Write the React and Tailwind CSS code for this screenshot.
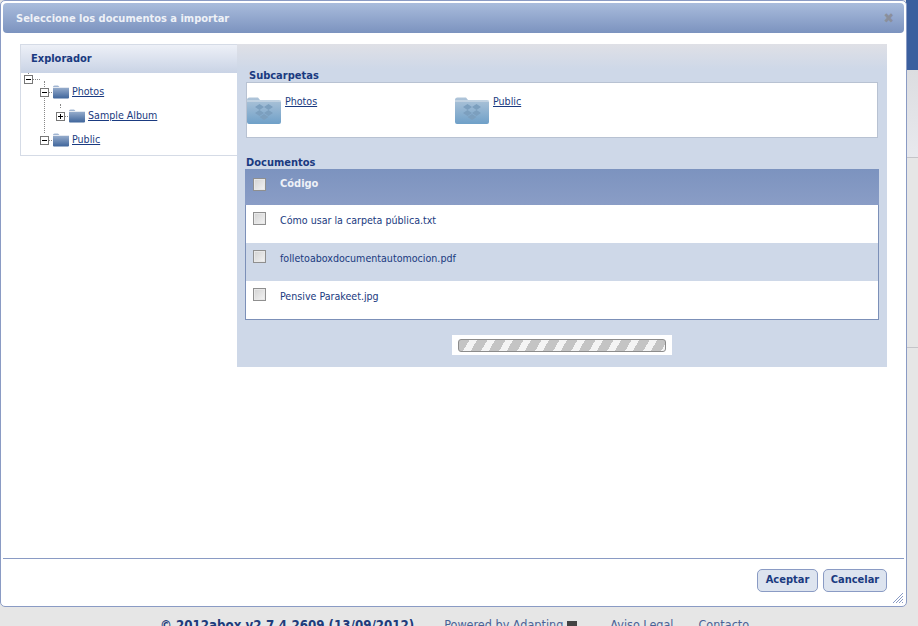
import React from 'react';

const FONT = "font-['Tahoma','DejaVu_Sans_Condensed','Noto_Sans','Liberation_Sans',sans-serif]";

const TreeToggle = ({ plus }) => (
  <span className="relative w-[9px] h-[9px] border border-[#777] bg-white shrink-0 flex items-center justify-center">
    <span className="w-[5px] h-px bg-black" />
    {plus && <span className="absolute w-px h-[5px] bg-black" />}
  </span>
);

const Dots = () => <span className="w-[3px] border-t border-dotted border-[#888] shrink-0" />;

const SmallFolder = () => (
  <svg width="16" height="14" viewBox="0 0 16 14" className="shrink-0">
    <defs>
      <linearGradient id="sf" x1="0" y1="0" x2="0" y2="1">
        <stop offset="0" stopColor="#a8bbd6" />
        <stop offset="1" stopColor="#3f659b" />
      </linearGradient>
    </defs>
    <path d="M0 2 Q0 0.5 1.5 0.5 H5 L6.5 2 H15 Q16 2 16 3 V12.5 Q16 13.5 15 13.5 H1 Q0 13.5 0 12.5 Z" fill="url(#sf)" />
    <path d="M0 2.5 H16" stroke="#e4e9f1" strokeWidth="1" />
  </svg>
);

const DropboxFolder = () => (
  <svg width="34" height="27" viewBox="0 0 34 27" className="shrink-0 mt-[3px]">
    <defs>
      <linearGradient id="df" x1="0" y1="0" x2="0" y2="1">
        <stop offset="0" stopColor="#b0c5d9" />
        <stop offset="1" stopColor="#6fa0c8" />
      </linearGradient>
    </defs>
    <path d="M0 3 Q0 0.5 2.5 0.5 H11 L13 3 H32 Q34 3 34 5 V25 Q34 27 32 27 H2 Q0 27 0 25 Z" fill="url(#df)" />
    <path d="M0 4 H34" stroke="#dbe4ec" strokeWidth="1" />
    <path d="M12.5 7 L17 10 L12.5 13 L8 10 Z M21.5 7 L26 10 L21.5 13 L17 10 Z M12.5 13 L17 16 L12.5 19 L8 16 Z M21.5 13 L26 16 L21.5 19 L17 16 Z M17 17 L21.5 20 L17 23 L12.5 20 Z" fill="#7c9fbe" />
  </svg>
);

const Checkbox = () => (
  <span className="block w-[13px] h-[13px] shrink-0 border border-[#8f8f8f] bg-gradient-to-br from-[#d2d2d2] to-[#f4f4f4] shadow-[inset_0_0_0_1px_#e8e8e8]" />
);

const docs = [
  { name: 'Cómo usar la carpeta pública.txt', bg: 'bg-white' },
  { name: 'folletoaboxdocumentautomocion.pdf', bg: 'bg-[#ced8e8]' },
  { name: 'Pensive Parakeet.jpg', bg: 'bg-white' },
];

export default function App() {
  return (
    <div className={`relative w-[918px] h-[626px] overflow-hidden bg-[#e6e6e6] flex flex-col ${FONT}`}>
      {/* page behind the dialog */}
      <div className="flex-1 flex flex-col items-end">
        <div className="w-3 h-[70px] bg-[#3b5f9e]" />
        <div className="w-3 h-[88px] bg-gradient-to-b from-[#dcdde0] to-[#e8e9ee] border-b border-[#c4c4c8]" />
        <div className="w-3 h-[190px] border-b border-[#c4c4c8]" />
      </div>
      <div className="h-5 shrink-0 flex items-start pl-[160px] pt-[10px] text-[12.5px] text-[#4a6296] whitespace-nowrap">
        <span className="text-[13.2px] font-bold text-[#1f3c7c]">© 2012abox v2.7.4.2609 (13/09/2012)</span>
        <span className="ml-[30px]">Powered by Adapting</span>
        <span className="ml-1 mt-[5px] w-[10px] h-[10px] bg-[#444]" />
        <span className="ml-[33px]">Aviso Legal</span>
        <span className="ml-[25px]">Contacto</span>
      </div>

      {/* dialog */}
      <div className="absolute left-0 top-0 w-[907px] h-[607px] bg-white border border-[#8a9bc4] rounded-[5px] p-[2px] flex flex-col">
        <div className="h-[30px] shrink-0 rounded-[4px] bg-gradient-to-b from-[#a9bcdc] to-[#7c93bf] flex items-center justify-between pl-[13px] pr-[10px]">
          <span className="pt-[2px] text-[11px] font-bold text-[#eef1f7]">Seleccione los documentos a importar</span>
          <span className="text-[14px] leading-none font-bold text-[#8a8f9c]">✖</span>
        </div>

        <div className="flex-1 flex items-start pl-[17px] pr-[17px] pt-[11px]">
          {/* tree */}
          <div className="w-[217px] shrink-0 h-[112px] border border-[#d5dbe6] border-r-0">
            <div className="h-[28px] bg-gradient-to-b from-[#edf0f7] to-[#c9d3e5] flex items-center pl-[10px] text-[11px] font-bold text-[#1a3a80]">
              Explorador
            </div>
            <div className="relative text-[10.6px] text-[#1a3a80]">
              <span className="absolute left-[7px] top-0 h-[3px] border-l border-dotted border-[#888]" />
              <span className="absolute left-[12px] top-[6px] w-[7px] border-t border-dotted border-[#888]" />
              <span className="absolute left-[23px] top-[8px] h-[52px] border-l border-dotted border-[#888]" />
              <span className="absolute left-[39px] top-[31px] h-[4px] border-l border-dotted border-[#888]" />
              <div className="pl-[3px] pt-[2px] h-[7px]"><TreeToggle /></div>
              <div className="flex items-center h-[24px] pl-[19px]">
                <TreeToggle /><Dots /><span className="w-px" /><SmallFolder />
                <span className="underline ml-[3px]">Photos</span>
              </div>
              <div className="flex items-center h-[24px] pl-[35px]">
                <TreeToggle plus /><Dots /><span className="w-px" /><SmallFolder />
                <span className="underline ml-[3px]">Sample Album</span>
              </div>
              <div className="flex items-center h-[24px] pl-[19px]">
                <TreeToggle /><Dots /><span className="w-px" /><SmallFolder />
                <span className="underline ml-[3px]">Public</span>
              </div>
            </div>
          </div>

          {/* content */}
          <div className="flex-1 h-[323px] bg-[#ced8e8] flex flex-col">
            <div className="h-[25px] shrink-0 bg-gradient-to-b from-[#dfe0e6] to-[#ced8e8]" />
            <div className="pl-[12px] text-[11px] leading-[13px] font-bold text-[#1a3a80]">Subcarpetas</div>
            <div className="mx-[9px] h-[56px] bg-white border border-[#b8c2d2] flex pt-[11px] text-[10.6px] text-[#1a3a80]">
              <div className="w-[208px] flex items-start gap-[4px]">
                <DropboxFolder /><span className="mt-px underline leading-[13px]">Photos</span>
              </div>
              <div className="flex items-start gap-[4px]">
                <DropboxFolder /><span className="mt-px underline leading-[13px]">Public</span>
              </div>
            </div>
            <div className="mt-[18px] pl-[9px] text-[11px] leading-[13px] font-bold text-[#1a3a80]">Documentos</div>
            <div className="mx-[8px] border border-t-0 border-[#7c90b8] bg-white">
              <div className="h-[36px] -mx-px bg-gradient-to-b from-[#7c93bf] to-[#8a9dc6] flex items-center pl-[8px] pb-[6px] gap-[14px]">
                <Checkbox />
                <span className="text-[11px] font-bold text-[#eef1f7]">Código</span>
              </div>
              {docs.map((doc) => (
                <div key={doc.name} className={`h-[38px] ${doc.bg} flex items-start pl-[7px] pt-[7px] gap-[14px]`}>
                  <Checkbox />
                  <span className="mt-px text-[10.6px] leading-[14px] text-[#1a3a80]">{doc.name}</span>
                </div>
              ))}
            </div>
            <div className="mt-[15px] self-center w-[220px] h-[20px] bg-white flex items-center justify-center">
              <div className="w-[208px] h-[13px] rounded-[3px] border border-[#8c8c8c] bg-[repeating-linear-gradient(120deg,#c4c4c4_0_9px,#f4f4f4_9px_15.6px)]" />
            </div>
          </div>
        </div>

        <div className="h-[46px] shrink-0 border-t border-[#8a9bc4] flex items-start justify-end gap-[5px] pt-[10px] pr-[17px]">
          <button className="w-[61px] h-[23px] rounded-[5px] border border-[#8a9bc4] bg-[#dde4ef] text-[11px] font-bold text-[#1a3a80]">Aceptar</button>
          <button className="w-[64px] h-[23px] rounded-[5px] border border-[#8a9bc4] bg-[#dde4ef] text-[11px] font-bold text-[#1a3a80]">Cancelar</button>
        </div>

        <svg width="12" height="12" viewBox="0 0 12 12" className="absolute right-[2px] bottom-[2px]">
          <path d="M1 11 L11 1 M4 11 L11 4 M7 11 L11 7 M10 11 L11 10" stroke="#8a9bc4" strokeWidth="1" />
        </svg>
      </div>
    </div>
  );
}
